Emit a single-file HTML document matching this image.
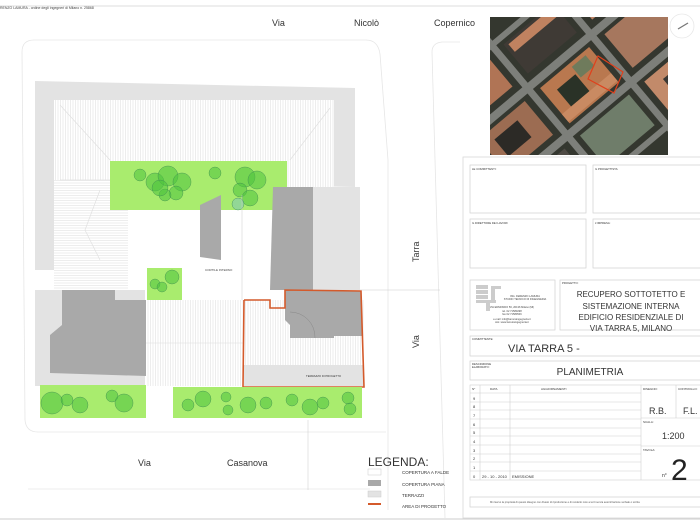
<!DOCTYPE html>
<html><head><meta charset="utf-8"><style>
html,body{margin:0;padding:0;background:#fff;}
body{width:700px;height:525px;overflow:hidden;position:relative;font-family:"Liberation Sans",sans-serif;}
svg{position:absolute;left:0;top:0;}
</style></head><body>
<svg width="700" height="525" viewBox="0 0 700 525" xmlns="http://www.w3.org/2000/svg" font-family="Liberation Sans, sans-serif">
<defs>
<pattern id="hv" width="2.5" height="4" patternUnits="userSpaceOnUse"><rect width="2.5" height="4" fill="#fff"/><line x1="0.5" y1="0" x2="0.5" y2="4" stroke="#e2e2e2" stroke-width="0.6"/></pattern>
<pattern id="hh" width="4" height="2.5" patternUnits="userSpaceOnUse"><rect width="4" height="2.5" fill="#fff"/><line x1="0" y1="0.5" x2="4" y2="0.5" stroke="#e2e2e2" stroke-width="0.6"/></pattern>
</defs>
<line x1="0" y1="6" x2="700" y2="6" stroke="#ddd" stroke-width="1"/>
<line x1="0" y1="519" x2="700" y2="519" stroke="#ccc" stroke-width="1"/>
<text x="0" y="9" font-size="3.5" fill="#444">RENZO LAMURA - ordine degli ingegneri di Milano n. 25868</text>
<text x="272" y="26" font-size="9" fill="#333">Via</text>
<text x="354" y="26" font-size="9" fill="#333">Nicolò</text>
<text x="434" y="26" font-size="9" fill="#333">Copernico</text>
<text x="138" y="466" font-size="9" fill="#333">Via</text>
<text x="227" y="466" font-size="9" fill="#333">Casanova</text>
<text transform="translate(419,262) rotate(-90)" font-size="9" fill="#333">Tarra</text>
<text transform="translate(419,348) rotate(-90)" font-size="9" fill="#333">Via</text>
<path d="M22,52 Q22,40 34,40 L366,40 Q378,40 380,54 L388,160 L388,510" fill="none" stroke="#e6e6e6" stroke-width="0.8"/>
<path d="M22,52 L25,420 Q26,432 38,432 L386,432" fill="none" stroke="#e6e6e6" stroke-width="0.8"/>
<path d="M432,52 Q432,43 442,42 L460,42" fill="none" stroke="#e6e6e6" stroke-width="0.8"/>
<line x1="432" y1="52" x2="445" y2="518" stroke="#e6e6e6" stroke-width="0.8"/>
<path d="M28,489 L370,489" fill="none" stroke="#e6e6e6" stroke-width="0.8"/>
<polygon points="35,81 355,88 355,187 35,180" fill="#e3e3e3"/>
<rect x="54" y="100" width="280" height="87" fill="url(#hv)"/>
<rect x="35" y="180" width="20" height="90" fill="#e3e3e3"/>
<rect x="54" y="180" width="74" height="110" fill="url(#hh)"/>
<path d="M60,105 L110,160 M330,108 L290,160 M100,190 L85,230 L100,260 M60,180 L128,180" stroke="#e0e0e0" fill="none" stroke-width="0.7"/>
<rect x="110" y="161" width="177" height="49" fill="#a9ec6e"/>
<rect x="110" y="161" width="18" height="35" fill="#a9ec6e"/>
<g fill="#4cc23e" fill-opacity="0.55" stroke="#3d8a52" stroke-width="0.4">
<circle cx="140" cy="175" r="6"/><circle cx="155" cy="182" r="9"/><circle cx="168" cy="176" r="10"/><circle cx="182" cy="182" r="9"/><circle cx="176" cy="193" r="7"/><circle cx="165" cy="195" r="6"/><circle cx="160" cy="188" r="8"/>
<circle cx="215" cy="173" r="6"/><circle cx="245" cy="177" r="10"/><circle cx="257" cy="180" r="9"/><circle cx="240" cy="190" r="7"/><circle cx="250" cy="198" r="8"/><circle cx="238" cy="204" r="6" fill="#7fc6b8"/>
</g>
<polygon points="200,205 221,195 221,260 200,257" fill="#a9a9a9"/>
<polygon points="273,187 313,187 313,290 270,290" fill="#a9a9a9"/>
<rect x="313" y="187" width="47" height="103" fill="#e3e3e3"/>
<line x1="242" y1="195" x2="242" y2="300" stroke="#ccc" stroke-width="0.5"/>
<text x="205" y="271" font-size="3" fill="#444">CORTILE INTERNO</text>
<rect x="147" y="268" width="35" height="32" fill="#a9ec6e"/>
<g fill="#4cc23e" fill-opacity="0.55" stroke="#3d8a52" stroke-width="0.4"><circle cx="172" cy="277" r="7"/><circle cx="155" cy="284" r="5"/><circle cx="162" cy="287" r="5"/></g>
<rect x="35" y="290" width="110" height="96" fill="#e3e3e3"/>
<polygon points="62,290 115,290 115,300 146,300 146,376 50,373 50,335 62,325" fill="#a9a9a9"/>
<rect x="146" y="300" width="98" height="86" fill="url(#hv)"/>
<line x1="146" y1="343" x2="244" y2="343" stroke="#ddd" stroke-width="0.5"/>
<rect x="244" y="300" width="120" height="86" fill="url(#hv)"/>
<rect x="244" y="365" width="120" height="21" fill="#e3e3e3"/>
<polygon points="285,290 361,291 362,336 334,336 334,338 290,338 290,325 285,320" fill="#a9a9a9"/>
<path d="M290,312 A25,25 0 0 1 315,338" fill="none" stroke="#888" stroke-width="0.5"/>
<polyline points="244,300 270,300 270,308 285,308 285,290 361,291 364,387 243,387 244,300" fill="none" stroke="#d45a2b" stroke-width="1.6"/>
<text x="306" y="377" font-size="2.8" fill="#333">TERRAZZO DI PROGETTO</text>
<rect x="40" y="385" width="106" height="33" fill="#a9ec6e"/>
<rect x="173" y="387" width="189" height="31" fill="#a9ec6e"/>
<g fill="#4cc23e" fill-opacity="0.55" stroke="#3d8a52" stroke-width="0.4">
<circle cx="52" cy="403" r="11"/><circle cx="67" cy="400" r="6"/><circle cx="80" cy="405" r="8"/><circle cx="112" cy="396" r="6"/><circle cx="124" cy="403" r="9"/>
<circle cx="188" cy="405" r="6"/><circle cx="203" cy="399" r="8"/><circle cx="226" cy="397" r="5"/><circle cx="228" cy="410" r="5"/><circle cx="248" cy="405" r="8"/><circle cx="266" cy="403" r="6"/><circle cx="292" cy="400" r="6"/><circle cx="310" cy="407" r="8"/><circle cx="323" cy="403" r="6"/><circle cx="348" cy="398" r="6"/><circle cx="350" cy="409" r="6"/>
</g>
<line x1="360" y1="290" x2="440" y2="290" stroke="#ccc" stroke-width="0.5"/>
<line x1="308" y1="420" x2="308" y2="490" stroke="#ccc" stroke-width="0.5"/>
<text x="368" y="466" font-size="12" fill="#333">LEGENDA:</text>
<rect x="368" y="469" width="13" height="6" fill="#fff" stroke="#ccc" stroke-width="0.5"/>
<rect x="368" y="480" width="13" height="6" fill="#a9a9a9"/>
<rect x="368" y="491" width="13" height="6" fill="#e3e3e3" stroke="#ccc" stroke-width="0.5"/>
<rect x="368" y="503" width="13" height="2" fill="#d45a2b"/>
<g font-size="4.5" fill="#333"><text x="402" y="474">COPERTURA A FALDE</text><text x="402" y="486">COPERTURA PIANA</text><text x="402" y="497">TERRAZZI</text><text x="402" y="508">AREA DI PROGETTO</text></g>
<!-- aerial photo -->
<clipPath id="ph"><rect x="490" y="17" width="178" height="138"/></clipPath>
<g clip-path="url(#ph)">
<rect x="490" y="17" width="178" height="138" fill="#34372f"/>
<g transform="rotate(-40 580 86)">
<rect x="440" y="50" width="300" height="8" fill="#7d7f7a"/>
<rect x="440" y="112" width="300" height="8" fill="#7d7f7a"/>
<rect x="440" y="-5" width="300" height="6" fill="#7d7f7a"/>
<rect x="440" y="170" width="300" height="6" fill="#7d7f7a"/>
<rect x="535" y="-40" width="7" height="260" fill="#7d7f7a"/>
<rect x="618" y="-40" width="7" height="260" fill="#7d7f7a"/>
<rect x="455" y="-40" width="6" height="260" fill="#7d7f7a"/>
<rect x="548" y="62" width="64" height="46" fill="#b9784f"/>
<rect x="560" y="74" width="24" height="22" fill="#2a3227"/>
<rect x="586" y="66" width="18" height="14" fill="#6f7b5c"/>
<rect x="548" y="96" width="64" height="10" fill="#c98a62"/>
<rect x="468" y="62" width="60" height="44" fill="#9c6c52"/>
<rect x="480" y="72" width="30" height="22" fill="#2c2a26"/>
<rect x="468" y="5" width="60" height="38" fill="#b07455"/>
<rect x="548" y="5" width="64" height="38" fill="#3f3a35"/>
<rect x="552" y="8" width="56" height="10" fill="#c08260"/>
<rect x="632" y="62" width="60" height="44" fill="#a6775e"/>
<rect x="632" y="5" width="60" height="38" fill="#bd8466"/>
<rect x="548" y="124" width="64" height="40" fill="#6f7d6a"/>
<rect x="468" y="124" width="60" height="40" fill="#4e4a44"/>
<rect x="632" y="124" width="60" height="40" fill="#c28a6a"/>
<rect x="648" y="134" width="30" height="18" fill="#3a3834"/>
</g>
<polygon points="598,56 623,72 614,93 588,79" fill="none" stroke="#e0401c" stroke-width="1.2"/>
</g>
<circle cx="682" cy="26" r="12" fill="none" stroke="#e8e8e8" stroke-width="0.8"/>
<line x1="678" y1="29" x2="688" y2="23" stroke="#777" stroke-width="1.3"/>
<rect x="463" y="157" width="240" height="361" fill="none" stroke="#d8d8d8" stroke-width="0.8"/>
<g fill="none" stroke="#d0d0d0" stroke-width="0.7">
<rect x="470" y="165" width="116" height="48"/><rect x="593" y="165" width="110" height="48"/>
<rect x="470" y="219" width="116" height="49"/><rect x="593" y="219" width="110" height="49"/>
<rect x="470" y="280" width="85" height="50"/><rect x="560" y="280" width="143" height="50"/>
<rect x="470" y="336" width="233" height="20"/><rect x="470" y="361" width="233" height="19"/>
<rect x="470" y="497" width="233" height="10"/>
</g>
<g font-size="2.8" fill="#333"><text x="472" y="170">LE COMMITTENTI:</text><text x="595" y="170">IL PROGETTISTA:</text><text x="472" y="224">IL DIRETTORE DEI LAVORI:</text><text x="595" y="224">L'IMPRESA:</text><text x="562" y="284">PROGETTO:</text><text x="472" y="340">COMMITTENTE:</text><text x="472" y="365">DESCRIZIONE</text><text x="472" y="368">ELABORATO:</text></g>
<g fill="#ccc"><rect x="476" y="285" width="12" height="4"/><rect x="476" y="290" width="12" height="4"/><rect x="476" y="295" width="12" height="4"/><rect x="476" y="300" width="20" height="3"/><rect x="486" y="303" width="4" height="8"/><rect x="491" y="287" width="4" height="14"/><rect x="491" y="286" width="10" height="3"/></g>
<g font-size="2.6" fill="#444" text-anchor="middle"><text x="525" y="297">ING. FERENZO LAMURA</text><text x="525" y="300">STUDIO TECNICO DI INGEGNERIA</text><text x="512" y="308">VIA EDMONDO 56, 20136 Milano (MI)</text><text x="512" y="312">tel. 02 71580298</text><text x="512" y="315">fax 02 71580546</text><text x="512" y="320">e-mail: info@lamuraingegneria.it</text><text x="512" y="323">sito: www.lamuraingegneria.it</text></g>
<g font-size="8" fill="#333" text-anchor="middle"><text x="631" y="297">RECUPERO SOTTOTETTO E</text><text x="631" y="309">SISTEMAZIONE INTERNA</text><text x="631" y="320">EDIFICIO RESIDENZIALE DI</text><text x="631" y="331">VIA TARRA 5, MILANO</text></g>
<text x="508" y="352" font-size="11" fill="#333">VIA TARRA 5 -</text>
<text x="590" y="375" font-size="10" fill="#333" text-anchor="middle">PLANIMETRIA</text>
<g fill="none" stroke="#d0d0d0" stroke-width="0.6">
<rect x="470" y="385" width="233" height="95"/>
<line x1="480" y1="385" x2="480" y2="480"/><line x1="510" y1="385" x2="510" y2="480"/><line x1="641" y1="385" x2="641" y2="480"/><line x1="676" y1="385" x2="676" y2="418"/>
<line x1="641" y1="418" x2="703" y2="418"/><line x1="641" y1="446" x2="703" y2="446"/>
<line x1="470" y1="393" x2="641" y2="393"/><line x1="470" y1="402" x2="641" y2="402"/><line x1="470" y1="410" x2="641" y2="410"/><line x1="470" y1="419" x2="641" y2="419"/><line x1="470" y1="428" x2="641" y2="428"/><line x1="470" y1="436" x2="641" y2="436"/><line x1="470" y1="445" x2="641" y2="445"/><line x1="470" y1="454" x2="641" y2="454"/><line x1="470" y1="462" x2="641" y2="462"/><line x1="470" y1="471" x2="641" y2="471"/>
</g>
<g font-size="3" fill="#333"><text x="472" y="390">N°</text><text x="490" y="390">DATA</text><text x="541" y="390">AGGIORNAMENTI</text><text x="643" y="390">DISEGNO:</text><text x="678" y="390">CONTROLLO:</text><text x="643" y="423">SCALA:</text><text x="643" y="451">TAVOLA:</text></g>
<g font-size="4" fill="#333"><text x="473" y="400">9</text><text x="473" y="408">8</text><text x="473" y="417">7</text><text x="473" y="426">6</text><text x="473" y="434">5</text><text x="473" y="443">4</text><text x="473" y="452">3</text><text x="473" y="460">2</text><text x="473" y="469">1</text><text x="473" y="478">0</text><text x="482" y="478">29 - 10 - 2010</text><text x="512" y="478">EMISSIONE</text></g>
<text x="649" y="414" font-size="9" fill="#333">R.B.</text>
<text x="683" y="414" font-size="9" fill="#333">F.L.</text>
<text x="662" y="439" font-size="9" fill="#333">1:200</text>
<text x="662" y="477" font-size="5" fill="#333">n°</text>
<text x="671" y="480" font-size="30" fill="#222">2</text>
<text x="490" y="503" font-size="2.6" fill="#555">Mi riservo la proprietà di questo disegno con divieto di riproduzione e di renderlo noto a terzi senza autorizzazione verbale o scritta</text>
</svg>
</body></html>
